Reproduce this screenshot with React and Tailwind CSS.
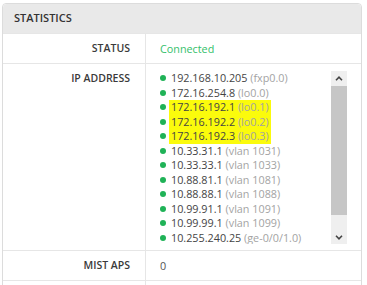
const ips = [
  { ip: '192.168.10.205', name: 'fxp0.0' },
  { ip: '172.16.254.8', name: 'lo0.0' },
  { ip: '172.16.192.1', name: 'lo0.1', hl: true },
  { ip: '172.16.192.2', name: 'lo0.2', hl: true },
  { ip: '172.16.192.3', name: 'lo0.3', hl: true },
  { ip: '10.33.31.1', name: 'vlan 1031' },
  { ip: '10.33.33.1', name: 'vlan 1033' },
  { ip: '10.88.81.1', name: 'vlan 1081' },
  { ip: '10.88.88.1', name: 'vlan 1088' },
  { ip: '10.99.91.1', name: 'vlan 1091' },
  { ip: '10.99.99.1', name: 'vlan 1099' },
  { ip: '10.255.240.25', name: 'ge-0/0/1.0' },
];

const Row = ({ label, children, className = '' }) => (
  <div className="flex border-t border-[#e6e6e6]">
    <div className={`w-[143px] shrink-0 border-r border-[#e6e6e6] pr-[15px] text-right text-[10.5px] font-semibold text-[#3a3a3a] ${className}`}>
      {label}
    </div>
    <div className={`flex-1 pl-[14px] text-[10.8px] ${className}`}>{children}</div>
  </div>
);

const App = () => {
  return (
    <div className="h-[285px] w-[367px] overflow-hidden bg-white pl-[2px] pt-[3px] font-['Open_Sans',sans-serif]">
      <div className="w-[360px] rounded-t-[4px] border border-[#dcdcdc]">
        <div className="flex h-[29px] items-center rounded-t-[4px] bg-[#e9e9e9] pl-[11px] text-[11px] font-semibold text-[#333]">
          STATISTICS
        </div>
        <Row label="STATUS" className="h-[29px] leading-[29px]">
          <span className="text-[#34c06a]">Connected</span>
        </Row>
        <Row label="IP ADDRESS" className="pt-[7px] pb-[6px] leading-[14.5px]">
          <div className="flex">
            <div className="h-[173px] flex-1 overflow-hidden">
              {ips.map((r) => (
                <div key={r.ip} className="flex h-[14.5px] items-center">
                  <span className="mr-[5px] h-[6px] w-[6px] shrink-0 rounded-full bg-[#1fb257]" />
                  <span className={`-ml-[2px] px-[2px] leading-[14.5px] ${r.hl ? 'bg-[#fbfb0c]' : ''}`}>
                    <span className="text-[#444]">{r.ip}</span>{' '}
                    <span className="text-[#a3a3a3]">({r.name})</span>
                  </span>
                </div>
              ))}
            </div>
            <div className="mr-[14px] flex h-[173px] w-[16px] flex-col bg-[#efefef]">
              <div className="flex h-[15px] items-center justify-center">
                <svg width="8" height="5" viewBox="0 0 8 5">
                  <path d="M1 4.2 L4 1.2 L7 4.2" fill="none" stroke="#444" strokeWidth="1.6" />
                </svg>
              </div>
              <div className="h-[129px] bg-[#c6c6c6]" />
              <div className="flex-1" />
              <div className="flex h-[14px] items-center justify-center">
                <svg width="8" height="5" viewBox="0 0 8 5">
                  <path d="M1 0.8 L4 3.8 L7 0.8" fill="none" stroke="#444" strokeWidth="1.6" />
                </svg>
              </div>
            </div>
          </div>
        </Row>
        <Row label="MIST APS" className="h-[29px] leading-[29px]">
          <span className="text-[#555]">0</span>
        </Row>
        <Row label="" className="h-[29px]" />
      </div>
    </div>
  );
};

export default App;
